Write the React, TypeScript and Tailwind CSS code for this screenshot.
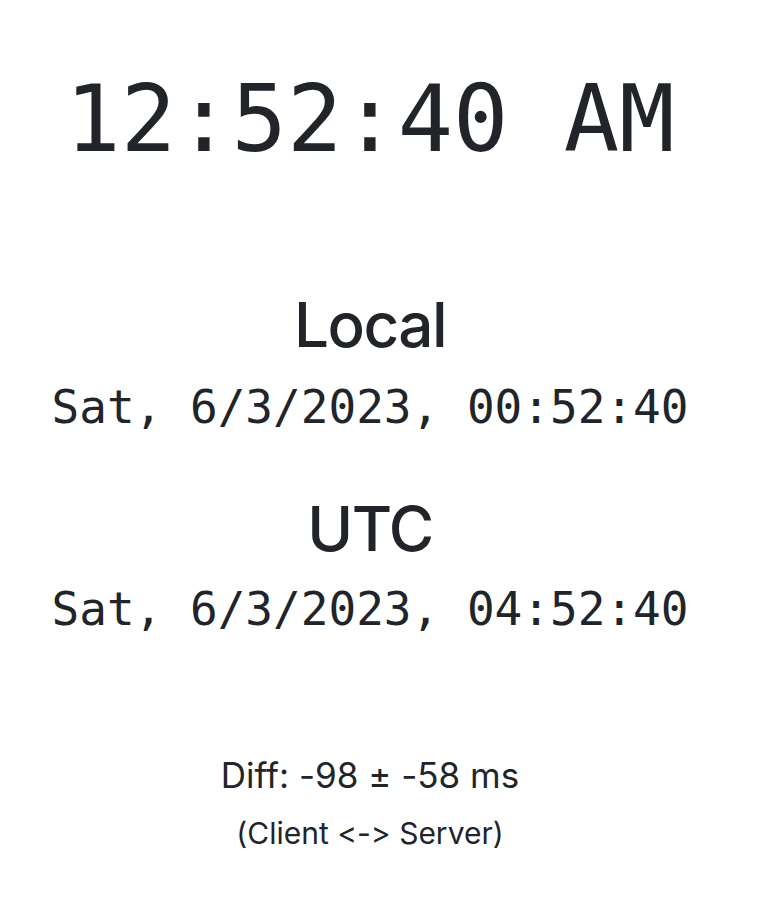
export default function App() {
  const mono = "font-['DejaVu_Sans_Mono',Menlo,monospace]";
  const sans = "font-['Inter','Liberation_Sans',sans-serif] [font-variant-ligatures:none]";

  return (
    <div className="min-h-screen bg-white text-[#212529] pr-[20px]">
      <div className="flex flex-col items-center pt-[74px]">
        {/* Clock */}
        <div className={`${mono} text-[92px] leading-none`}>12:52:40 AM</div>

        {/* Local */}
        <h2 className={`${sans} text-[62px] leading-none font-medium tracking-[-0.025em] mt-[128px]`}>
          Local
        </h2>
        <div className={`${mono} text-[46px] leading-none mt-[28px]`}>
          Sat, 6/3/2023, 00:52:40
        </div>

        {/* UTC */}
        <h2 className={`${sans} text-[62px] leading-none font-medium tracking-[-0.025em] mt-[68px]`}>
          UTC
        </h2>
        <div className={`${mono} text-[46px] leading-none mt-[26px]`}>
          Sat, 6/3/2023, 04:52:40
        </div>

        {/* Diff */}
        <div className={`${sans} text-[35px] leading-none mt-[126px]`}>Diff: -98 ± -58 ms</div>
        <div className={`${sans} text-[30px] leading-none mt-[25px]`}>(Client &lt;-&gt; Server)</div>
      </div>
    </div>
  );
}
